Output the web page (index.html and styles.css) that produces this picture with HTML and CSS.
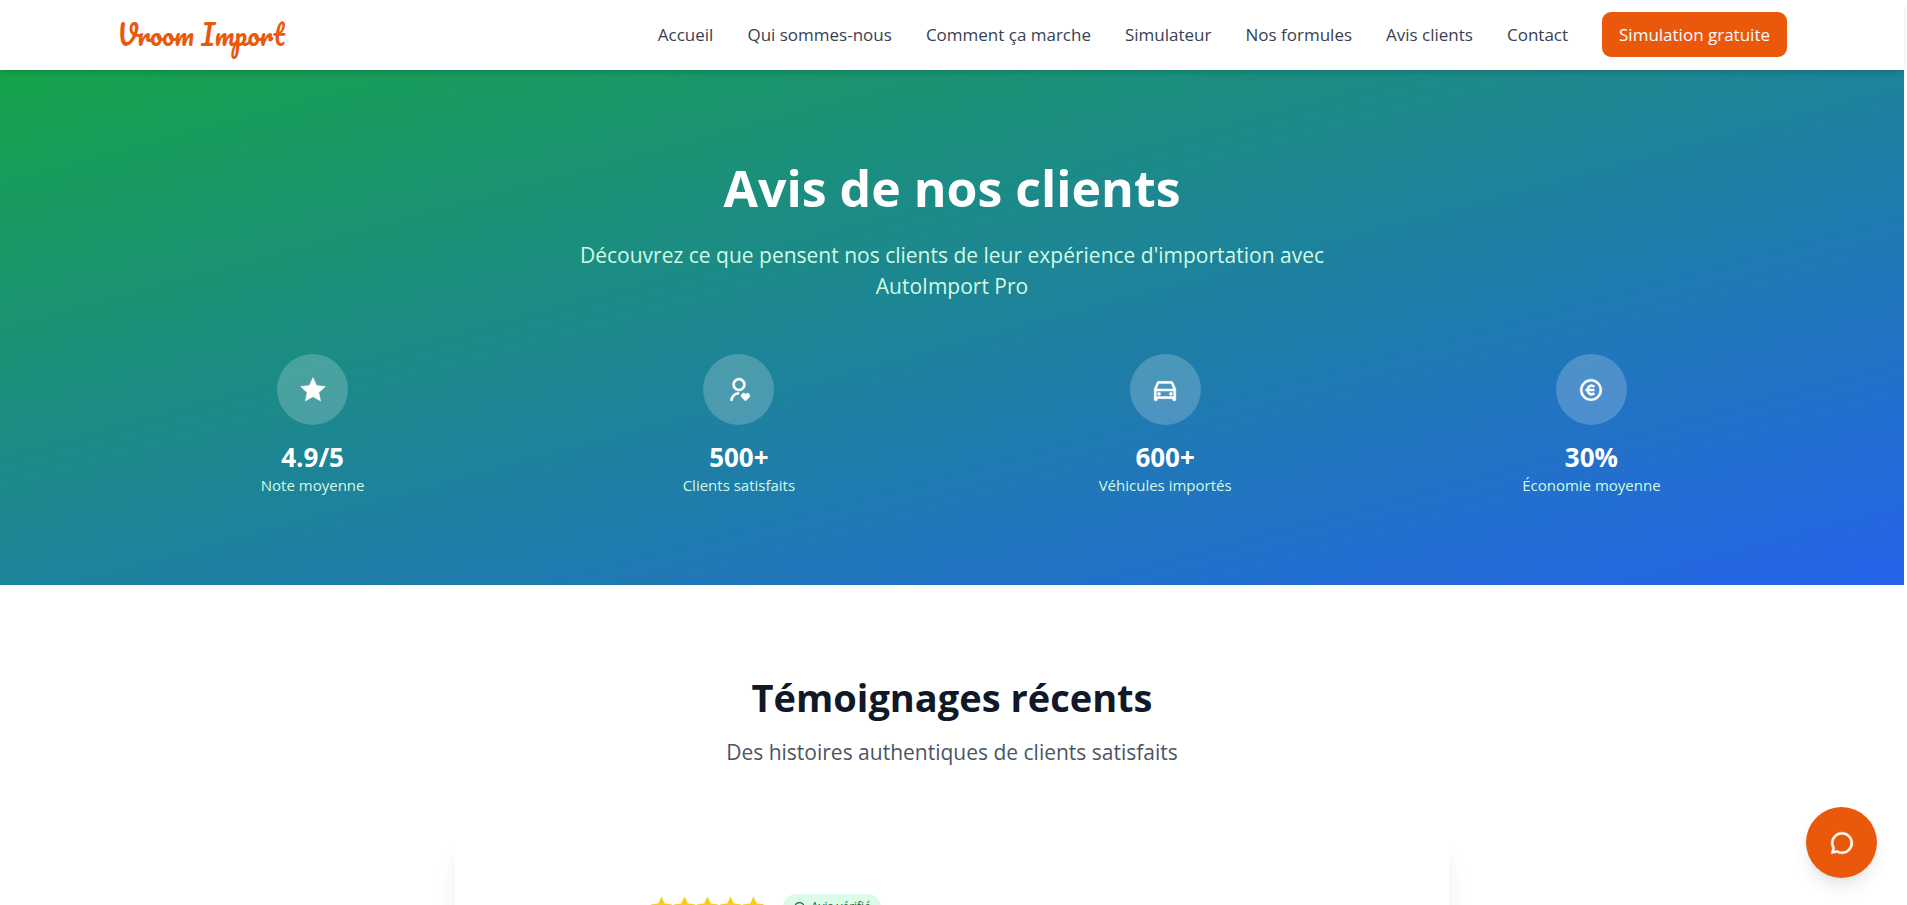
FILE: index.html
```html
<!DOCTYPE html>
<html lang="fr">
<head>
  <meta charset="UTF-8">
  <meta name="viewport" content="width=device-width, initial-scale=1.0">
  <title>Avis clients - Vroom Import</title>
  <link rel="stylesheet" href="styles.css">
</head>
<body>
  <svg class="sprite" aria-hidden="true">
    <symbol id="star" viewBox="0 0 24 24"><path d="M12.0006 18.26L4.94715 22.2082L6.52248 14.2799L0.587891 8.7918L8.61493 7.84006L12.0006 0.5L15.3862 7.84006L23.4132 8.7918L17.4787 14.2799L19.054 22.2082L12.0006 18.26Z"/></symbol>
  </svg>

  <header class="header">
    <a href="#" class="logo">Vroom Import</a>
    <nav class="nav">
      <a href="#">Accueil</a>
      <a href="#">Qui sommes-nous</a>
      <a href="#">Comment ça marche</a>
      <a href="#">Simulateur</a>
      <a href="#">Nos formules</a>
      <a href="#">Avis clients</a>
      <a href="#">Contact</a>
      <a href="#" class="nav-cta">Simulation gratuite</a>
    </nav>
  </header>

  <main>
    <section class="hero">
      <h1>Avis de nos clients</h1>
      <p class="hero-text">Découvrez ce que pensent nos clients de leur expérience d'importation avec AutoImport Pro</p>

      <div class="stats">
        <div class="stat">
          <div class="stat-icon"><svg class="icon"><use href="#star"/></svg></div>
          <div class="stat-value">4.9/5</div>
          <div class="stat-label">Note moyenne</div>
        </div>
        <div class="stat">
          <div class="stat-icon">
            <svg class="icon" viewBox="0 0 24 24"><path d="M17.841 15.659l.176.177.178-.177a2.25 2.25 0 1 1 3.182 3.182l-3.36 3.359-3.358-3.359a2.25 2.25 0 0 1 3.182-3.182zM12 14v2a6 6 0 0 0-6 6H4a8 8 0 0 1 7.75-7.996L12 14zm0-13c3.315 0 6 2.685 6 6a5.998 5.998 0 0 1-5.775 5.996L12 13c-3.315 0-6-2.685-6-6a5.998 5.998 0 0 1 5.775-5.996L12 1zm0 2C9.79 3 8 4.79 8 7s1.79 4 4 4 4-1.79 4-4-1.79-4-4-4z"/></svg>
          </div>
          <div class="stat-value">500+</div>
          <div class="stat-label">Clients satisfaits</div>
        </div>
        <div class="stat">
          <div class="stat-icon">
            <svg class="icon" viewBox="0 0 24 24"><path d="M19 20H5v1a1 1 0 0 1-1 1H3a1 1 0 0 1-1-1V11l2.48-5.788A2 2 0 0 1 6.32 4H17.68a2 2 0 0 1 1.838 1.212L22 11v10a1 1 0 0 1-1 1h-1a1 1 0 0 1-1-1v-1zm1-7H4v5h16v-5zM4.176 11h15.648l-2.143-5H6.32l-2.143 5zM6.5 17a1.5 1.5 0 1 1 0-3 1.5 1.5 0 0 1 0 3zm11 0a1.5 1.5 0 1 1 0-3 1.5 1.5 0 0 1 0 3z"/></svg>
          </div>
          <div class="stat-value">600+</div>
          <div class="stat-label">Véhicules importés</div>
        </div>
        <div class="stat">
          <div class="stat-icon">
            <svg class="icon" viewBox="0 0 24 24"><path d="M12 22C6.477 22 2 17.523 2 12S6.477 2 12 2s10 4.477 10 10-4.477 10-10 10zm0-2a8 8 0 1 0 0-16 8 8 0 0 0 0 16zm-1.95-9H15v2h-4.95a2.5 2.5 0 0 0 4.064 1.41l1.7 1.133A4.5 4.5 0 0 1 8.028 13H7v-2h1.027a4.5 4.5 0 0 1 7.788-2.543L14.114 9.59A2.5 2.5 0 0 0 10.05 11z"/></svg>
          </div>
          <div class="stat-value">30%</div>
          <div class="stat-label">Économie moyenne</div>
        </div>
      </div>
    </section>

    <section class="reviews">
      <h2>Témoignages récents</h2>
      <p class="reviews-text">Des histoires authentiques de clients satisfaits</p>

      <article class="review-card">
        <div class="review-top">
          <div class="rating">
            <svg><use href="#star"/></svg>
            <svg><use href="#star"/></svg>
            <svg><use href="#star"/></svg>
            <svg><use href="#star"/></svg>
            <svg><use href="#star"/></svg>
          </div>
          <span class="badge">
            <svg viewBox="0 0 24 24"><path d="M12 22C6.477 22 2 17.523 2 12S6.477 2 12 2s10 4.477 10 10-4.477 10-10 10zm0-2a8 8 0 1 0 0-16 8 8 0 0 0 0 16zm-.997-4L6.76 11.757l1.414-1.414 2.829 2.829 5.656-5.657 1.415 1.414L11.003 16z"/></svg>
            Avis vérifié
          </span>
        </div>
      </article>
    </section>
  </main>

  <button class="chat-btn" aria-label="Ouvrir le chat">
    <svg class="icon" viewBox="0 0 24 24"><path d="M7.291 20.824L2 22l1.176-5.291A9.956 9.956 0 0 1 2 12C2 6.477 6.477 2 12 2s10 4.477 10 10-4.477 10-10 10a9.956 9.956 0 0 1-4.709-1.176zm.29-2.113l.653.35A7.955 7.955 0 0 0 12 20a8 8 0 1 0-8-8c0 1.334.325 2.618.94 3.766l.349.653-.655 2.947 2.947-.655z"/></svg>
  </button>
</body>
</html>
```

FILE: styles.css
```css
* {
  box-sizing: border-box;
  margin: 0;
  padding: 0;
}
body {
  height: 100vh;
  overflow: hidden;
  padding-right: 3px;
  background: #fff;
  color: #111827;
  font-family: 'Segoe UI', 'Open Sans', 'Noto Sans', sans-serif;
  font-size: 17px;
}
a {
  color: inherit;
  text-decoration: none;
}
svg {
  display: block;
  fill: currentColor;
}
.sprite {
  display: none;
}
.icon {
  width: 26px;
  height: 26px;
  stroke: currentColor;
  stroke-width: 0.4;
}

/* Header */
.header {
  position: relative;
  z-index: 10;
  display: flex;
  align-items: center;
  justify-content: space-between;
  height: 70px;
  padding: 0 117px 2px;
  background: #fff;
  box-shadow: 0 4px 6px -1px rgba(0,0,0,0.1), 0 2px 4px -2px rgba(0,0,0,0.1);
}
.logo {
  color: #ea580c;
  font-family: Pacifico, cursive;
  font-size: 27px;
}
.nav {
  display: flex;
  align-items: center;
  gap: 34px;
  color: #374151;
  white-space: nowrap;
}
.nav-cta {
  padding: 9px 17px;
  border-radius: 9px;
  background: #ea580c;
  color: #fff;
  line-height: 27px;
}

/* Hero */
.hero {
  padding: 88px 117px;
  background: linear-gradient(to bottom right, #16a34a, #2563eb);
  color: #fff;
  text-align: center;
}
.hero h1 {
  margin-bottom: 21px;
  font-size: 50px;
  line-height: 61px;
}
.hero-text {
  max-width: 845px;
  margin: 0 auto 52px;
  color: #d1fae5;
  font-size: 21px;
  line-height: 31px;
}
.stats {
  display: grid;
  grid-template-columns: repeat(4, 1fr);
  gap: 35px;
}
.stat-icon {
  display: flex;
  align-items: center;
  justify-content: center;
  width: 71px;
  height: 71px;
  margin: 0 auto 17px;
  border-radius: 50%;
  background: rgba(255,255,255,0.2);
}
.stat-value {
  font-size: 26px;
  font-weight: 700;
  line-height: 31px;
}
.stat-label {
  color: #d1fae5;
  font-size: 15px;
  line-height: 24px;
}

/* Reviews */
.reviews {
  padding: 88px 117px;
  text-align: center;
}
.reviews h2 {
  margin-bottom: 16px;
  font-size: 38px;
  line-height: 48px;
}
.reviews-text {
  margin-bottom: 61px;
  color: #4b5563;
  font-size: 21px;
  line-height: 31px;
}
.review-card {
  max-width: 994px;
  min-height: 400px;
  margin: 0 auto;
  padding: 65px 53px 53px 195px;
  border-radius: 18px;
  background: #fff;
  box-shadow: 0 22px 28px -6px rgba(0,0,0,0.1), 0 9px 11px -7px rgba(0,0,0,0.1);
}
.review-top {
  display: flex;
  align-items: center;
  gap: 18px;
}
.rating {
  display: flex;
  color: #facc15;
}
.rating svg {
  width: 23px;
  height: 23px;
}
.badge {
  display: flex;
  align-items: center;
  gap: 5px;
  padding: 4px 10px;
  border-radius: 99px;
  background: #dcfce7;
  color: #166534;
  font-size: 12px;
  line-height: 18px;
}
.badge svg {
  width: 13px;
  height: 13px;
}

/* Chat */
.chat-btn {
  position: fixed;
  right: 30px;
  bottom: 27px;
  display: flex;
  align-items: center;
  justify-content: center;
  width: 71px;
  height: 71px;
  border: none;
  border-radius: 50%;
  background: #ea580c;
  color: #fff;
  box-shadow: 0 11px 17px -3px rgba(0,0,0,0.1), 0 4px 7px -4px rgba(0,0,0,0.1);
  cursor: pointer;
}
```
